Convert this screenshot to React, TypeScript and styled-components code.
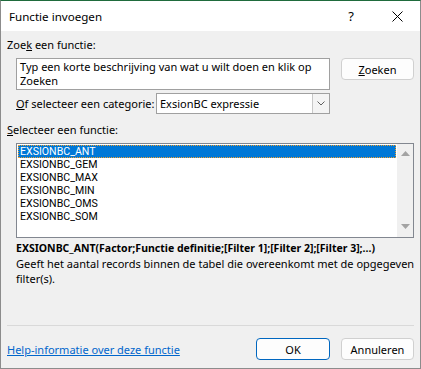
import styled, { createGlobalStyle } from 'styled-components'

const GlobalStyle = createGlobalStyle`
  html, body {
    margin: 0;
    padding: 0;
    background: #f0f0f0;
  }
`

const Dialog = styled.div`
  width: 421px;
  height: 369px;
  box-sizing: border-box;
  background: #f0f0f0;
  border: 1px solid #8c8c8c;
  border-top-color: #1f6b3c;
  display: flex;
  flex-direction: column;
  font-family: "Noto Sans", "Liberation Sans", sans-serif;
  font-size: 11px;
  color: #000;
`

const TitleBar = styled.div`
  height: 30px;
  background: #fff;
  display: flex;
  align-items: center;
  padding-left: 8px;
  font-size: 11.6px;
`

const Title = styled.div`
  flex: 1;
`

const CaptionButton = styled.div`
  width: 46px;
  height: 30px;
  display: flex;
  align-items: center;
  justify-content: center;
  font-size: 13px;
`

const Body = styled.div`
  flex: 1;
  display: flex;
  flex-direction: column;
  padding: 0 6px;
`

const Label = styled.div<{ $top: number; $indent?: number }>`
  line-height: 14px;
  margin-top: ${p => p.$top}px;
  padding-left: ${p => p.$indent ?? 0}px;
  white-space: nowrap;
`

const SearchRow = styled.div`
  display: flex;
  justify-content: space-between;
  align-items: flex-start;
  margin-top: 6px;
  padding-left: 9px;
`

const SearchBox = styled.div`
  width: 314px;
  height: 32px;
  box-sizing: border-box;
  background: #fff;
  border: 1px solid #a0a0a0;
  padding: 1px 3px 0;
  line-height: 14px;
  white-space: nowrap;
  overflow: hidden;
`

const Button = styled.div<{ $primary?: boolean }>`
  width: ${p => (p.$primary ? 74 : 73)}px;
  height: 22px;
  box-sizing: border-box;
  background: #fdfdfd;
  border: 1px solid ${p => (p.$primary ? '#0067c0' : '#d0d0d0')};
  border-radius: 4px;
  display: flex;
  align-items: center;
  justify-content: center;
`

const CategoryRow = styled.div`
  display: flex;
  align-items: center;
  margin-top: 3px;
  padding-left: 9px;
`

const CategoryLabel = styled.div`
  width: 140px;
  white-space: nowrap;
`

const Select = styled.div`
  width: 174px;
  height: 21px;
  box-sizing: border-box;
  background: #fff;
  border: 1px solid #a0a0a0;
  display: flex;
  align-items: stretch;
`

const SelectValue = styled.div`
  flex: 1;
  display: flex;
  align-items: center;
  padding-left: 3px;
`

const SelectArrow = styled.div`
  width: 16px;
  border-left: 1px solid #c8c8c8;
  background: #f4f4f4;
  display: flex;
  align-items: center;
  justify-content: center;
`

const ListBox = styled.div`
  margin: 6px 0 0 9px;
  width: 398px;
  height: 95px;
  box-sizing: border-box;
  border: 1px solid #828790;
  background: #fff;
  display: grid;
  grid-template-columns: 1fr 16px;
`

const Items = styled.div`
  padding: 1px;
  font-family: Roboto, "Liberation Sans", sans-serif;
  font-size: 10.6px;
`

const Item = styled.div<{ $selected?: boolean }>`
  height: 13px;
  line-height: 13px;
  padding-left: 2px;
  box-sizing: border-box;
  background: ${p => (p.$selected ? '#0078d7' : 'transparent')};
  color: ${p => (p.$selected ? '#fff' : '#000')};
  outline: ${p => (p.$selected ? '1px dotted #f0a030' : 'none')};
  outline-offset: -1px;
`

const ScrollBar = styled.div`
  background: #f0f0f0;
  display: flex;
  flex-direction: column;
  justify-content: space-between;
  align-items: center;
  padding: 7px 0 8px;
`

const Signature = styled.div`
  margin-top: 3px;
  padding-left: 9px;
  line-height: 15px;
  font-size: 10.5px;
  font-weight: bold;
  white-space: nowrap;
`

const Description = styled.div`
  padding-left: 9px;
  line-height: 15px;
  white-space: nowrap;
`

const Footer = styled.div`
  margin-top: auto;
  border-top: 1px solid #d9d9d9;
  padding: 12px 0 8px;
  display: flex;
  align-items: center;
  gap: 11px;
`

const HelpLink = styled.a`
  color: #0066cc;
  text-decoration: underline;
  margin-right: auto;
  cursor: pointer;
`

const Triangle = ({ up }: { up?: boolean }) => (
  <svg width="9" height="5" viewBox="0 0 9 5">
    <polygon points={up ? '0,5 9,5 4.5,0' : '0,0 9,0 4.5,5'} fill="#a3a3a3" />
  </svg>
)

const functions = ['EXSIONBC_ANT', 'EXSIONBC_GEM', 'EXSIONBC_MAX', 'EXSIONBC_MIN', 'EXSIONBC_OMS', 'EXSIONBC_SOM']

export default function App() {
  return (
    <>
      <GlobalStyle />
      <Dialog>
        <TitleBar>
          <Title>Functie invoegen</Title>
          <CaptionButton>?</CaptionButton>
          <CaptionButton>
            <svg width="11" height="11" viewBox="0 0 11 11">
              <path d="M0.5 0.5 L10.5 10.5 M10.5 0.5 L0.5 10.5" stroke="#000" strokeWidth="1" />
            </svg>
          </CaptionButton>
        </TitleBar>
        <Body>
          <Label $top={7}>
            Zoe<u>k</u> een functie:
          </Label>
          <SearchRow>
            <SearchBox>
              Typ een korte beschrijving van wat u wilt doen en klik op
              <br />
              Zoeken
            </SearchBox>
            <Button>
              <u>Z</u>oeken
            </Button>
          </SearchRow>
          <CategoryRow>
            <CategoryLabel>
              <u>O</u>f selecteer een categorie:
            </CategoryLabel>
            <Select>
              <SelectValue>ExsionBC expressie</SelectValue>
              <SelectArrow>
                <svg width="8" height="5" viewBox="0 0 8 5">
                  <path d="M0.5 0.5 L4 4 L7.5 0.5" stroke="#606060" fill="none" strokeWidth="1" />
                </svg>
              </SelectArrow>
            </Select>
          </CategoryRow>
          <Label $top={9}>
            <u>S</u>electeer een functie:
          </Label>
          <ListBox>
            <Items>
              {functions.map((f, i) => (
                <Item key={f} $selected={i === 0}>
                  {f}
                </Item>
              ))}
            </Items>
            <ScrollBar>
              <Triangle up />
              <Triangle />
            </ScrollBar>
          </ListBox>
          <Signature>EXSIONBC_ANT(Factor;Functie definitie;[Filter 1];[Filter 2];[Filter 3];...)</Signature>
          <Description>
            Geeft het aantal records binnen de tabel die overeenkomt met de opgegeven
            <br />
            filter(s).
          </Description>
          <Footer>
            <HelpLink>Help-informatie over deze functie</HelpLink>
            <Button $primary>OK</Button>
            <Button>Annuleren</Button>
          </Footer>
        </Body>
      </Dialog>
    </>
  )
}
